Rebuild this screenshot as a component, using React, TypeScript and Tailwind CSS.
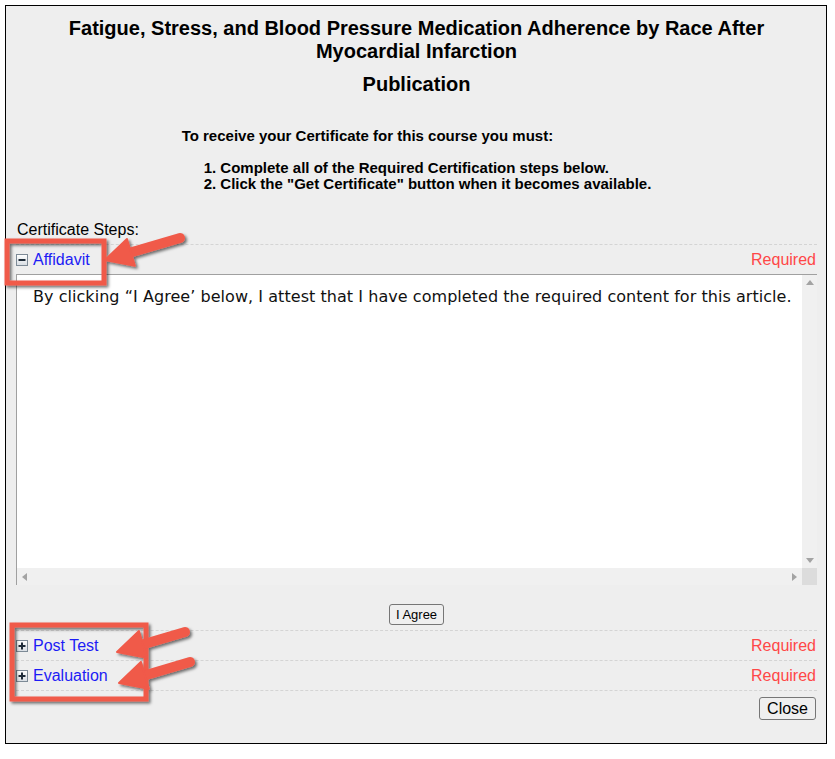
import React from 'react';

type ArrowProps = { x1: number; y1: number; x2: number; y2: number };

function Arrow({ x1, y1, x2, y2 }: ArrowProps) {
  const dx = x2 - x1;
  const dy = y2 - y1;
  const len = Math.sqrt(dx * dx + dy * dy);
  const ux = dx / len;
  const uy = dy / len;
  const nx = -uy;
  const ny = ux;
  const headLen = 27;
  const hw = 14;
  const bx = x2 - ux * headLen;
  const by = y2 - uy * headLen;
  const pts = `${x2},${y2} ${bx + nx * hw},${by + ny * hw} ${bx - nx * hw},${by - ny * hw}`;
  return (
    <g>
      <line x1={x1} y1={y1} x2={bx + ux * 3} y2={by + uy * 3} stroke="#f05a4a" strokeWidth={10} strokeLinecap="round" />
      <polygon points={pts} fill="#f05a4a" strokeLinejoin="round" stroke="#f05a4a" strokeWidth={2} />
    </g>
  );
}

function ToggleIcon({ open }: { open: boolean }) {
  return (
    <svg width="12" height="12" viewBox="0 0 12 12" className="shrink-0">
      <defs>
        <linearGradient id={open ? 'gm' : 'gp'} x1="0" y1="0" x2="0" y2="1">
          <stop offset="0" stopColor="#ffffff" />
          <stop offset="1" stopColor="#d8dde3" />
        </linearGradient>
      </defs>
      <rect x="0.5" y="0.5" width="11" height="11" fill={`url(#${open ? 'gm' : 'gp'})`} stroke="#7d8a96" />
      <rect x="2.5" y="5" width="7" height="2" fill="#1e2b38" />
      {!open && <rect x="5" y="2.5" width="2" height="7" fill="#1e2b38" />}
    </svg>
  );
}

function StepRow({ label, open }: { label: string; open: boolean }) {
  return (
    <div className="flex h-[30px] items-center justify-between border-t border-dashed border-[#d4d4d4] pr-[1px]">
      <div className="flex items-center gap-[5px]">
        <ToggleIcon open={open} />
        <span className="text-[16px] text-[#1c1cf5]">{label}</span>
      </div>
      <span className="text-[16px] text-[#ff4747]">Required</span>
    </div>
  );
}

export default function App() {
  return (
    <div className="relative h-[759px] w-[835px] bg-white font-['Liberation_Sans',Arial,sans-serif] text-black">
      <div className="ml-[5px] mt-[5px] h-[739px] w-[822px] border border-black bg-[#eeeeee] pl-[10px] pr-[9px] pt-[11px]">
        <h1 className="mx-auto w-[720px] text-center text-[20px] font-bold leading-[23px]">
          Fatigue, Stress, and Blood Pressure Medication Adherence by Race After Myocardial Infarction
        </h1>
        <h2 className="mt-[10px] text-center text-[20px] font-bold leading-[23px]">Publication</h2>

        <div className="mx-auto mt-[32px] w-fit text-[15px] font-bold leading-[16px]">
          <p>To receive your Certificate for this course you must:</p>
          <div className="mt-[16px] pl-[22px]">
            <div>1. Complete all of the Required Certification steps below.</div>
            <div>2. Click the "Get Certificate" button when it becomes available.</div>
          </div>
        </div>

        <div className="mt-[29px] pl-[1px] text-[16px] leading-[18px]">Certificate Steps:</div>

        <div className="mt-[5px]">
          <StepRow label="Affidavit" open />
          <div className="flex h-[311px] flex-col border-l border-t border-[#a0a0a0]">
            <div className="flex flex-1">
              <div className="flex-1 bg-white pl-[16px] pt-[13px] font-['DejaVu_Sans',Verdana,sans-serif] text-[16px] leading-[18px] tracking-[0.05px] text-[#111]">
                By clicking “I Agree’ below, I attest that I have completed the required content for this article.
              </div>
              <div className="flex w-[15px] flex-col items-center justify-between bg-[#f0f0f0] py-[5px]">
                <svg width="8" height="5" viewBox="0 0 8 5"><polygon points="4,0 8,5 0,5" fill="#a3a3a3" /></svg>
                <svg width="8" height="5" viewBox="0 0 8 5"><polygon points="0,0 8,0 4,5" fill="#a3a3a3" /></svg>
              </div>
            </div>
            <div className="flex h-[17px]">
              <div className="flex flex-1 items-center justify-between bg-[#f0f0f0] px-[5px]">
                <svg width="5" height="8" viewBox="0 0 5 8"><polygon points="0,4 5,0 5,8" fill="#a3a3a3" /></svg>
                <svg width="5" height="8" viewBox="0 0 5 8"><polygon points="0,0 5,4 0,8" fill="#a3a3a3" /></svg>
              </div>
              <div className="w-[15px] bg-[#dcdcdc]" />
            </div>
          </div>
        </div>

        <div className="mt-[19px] flex justify-center">
          <button className="h-[21px] rounded-[3px] border border-[#767676] bg-[#efefef] px-[6px] text-[13px] leading-[17px] text-black">
            I Agree
          </button>
        </div>

        <div className="mt-[5px]">
          <StepRow label="Post Test" open={false} />
          <StepRow label="Evaluation" open={false} />
          <div className="border-t border-dashed border-[#d4d4d4]" />
        </div>

        <div className="mt-[6px] flex justify-end pr-[1px]">
          <button className="h-[23px] rounded-[3px] border border-[#767676] bg-[#efefef] px-[7px] text-[16px] leading-[19px] text-black">
            Close
          </button>
        </div>
      </div>

      {/* annotations */}
      <svg className="pointer-events-none absolute left-0 top-0" width="835" height="759" viewBox="0 0 835 759">
        <defs>
          <filter id="sh" x="-20%" y="-20%" width="140%" height="140%">
            <feDropShadow dx="2" dy="2" stdDeviation="1.5" floodColor="#000" floodOpacity="0.55" />
          </filter>
        </defs>
        <g filter="url(#sh)">
          <rect x="7" y="236" width="97" height="42" fill="none" stroke="#f05a4a" strokeWidth="5" />
          <rect x="12" y="620" width="134" height="74" fill="none" stroke="#f05a4a" strokeWidth="5" />
          <Arrow x1={180} y1={233} x2={105} y2={255} />
          <Arrow x1={185} y1={627} x2={117} y2={647} />
          <Arrow x1={190} y1={657} x2={119} y2={678} />
        </g>
      </svg>
    </div>
  );
}
